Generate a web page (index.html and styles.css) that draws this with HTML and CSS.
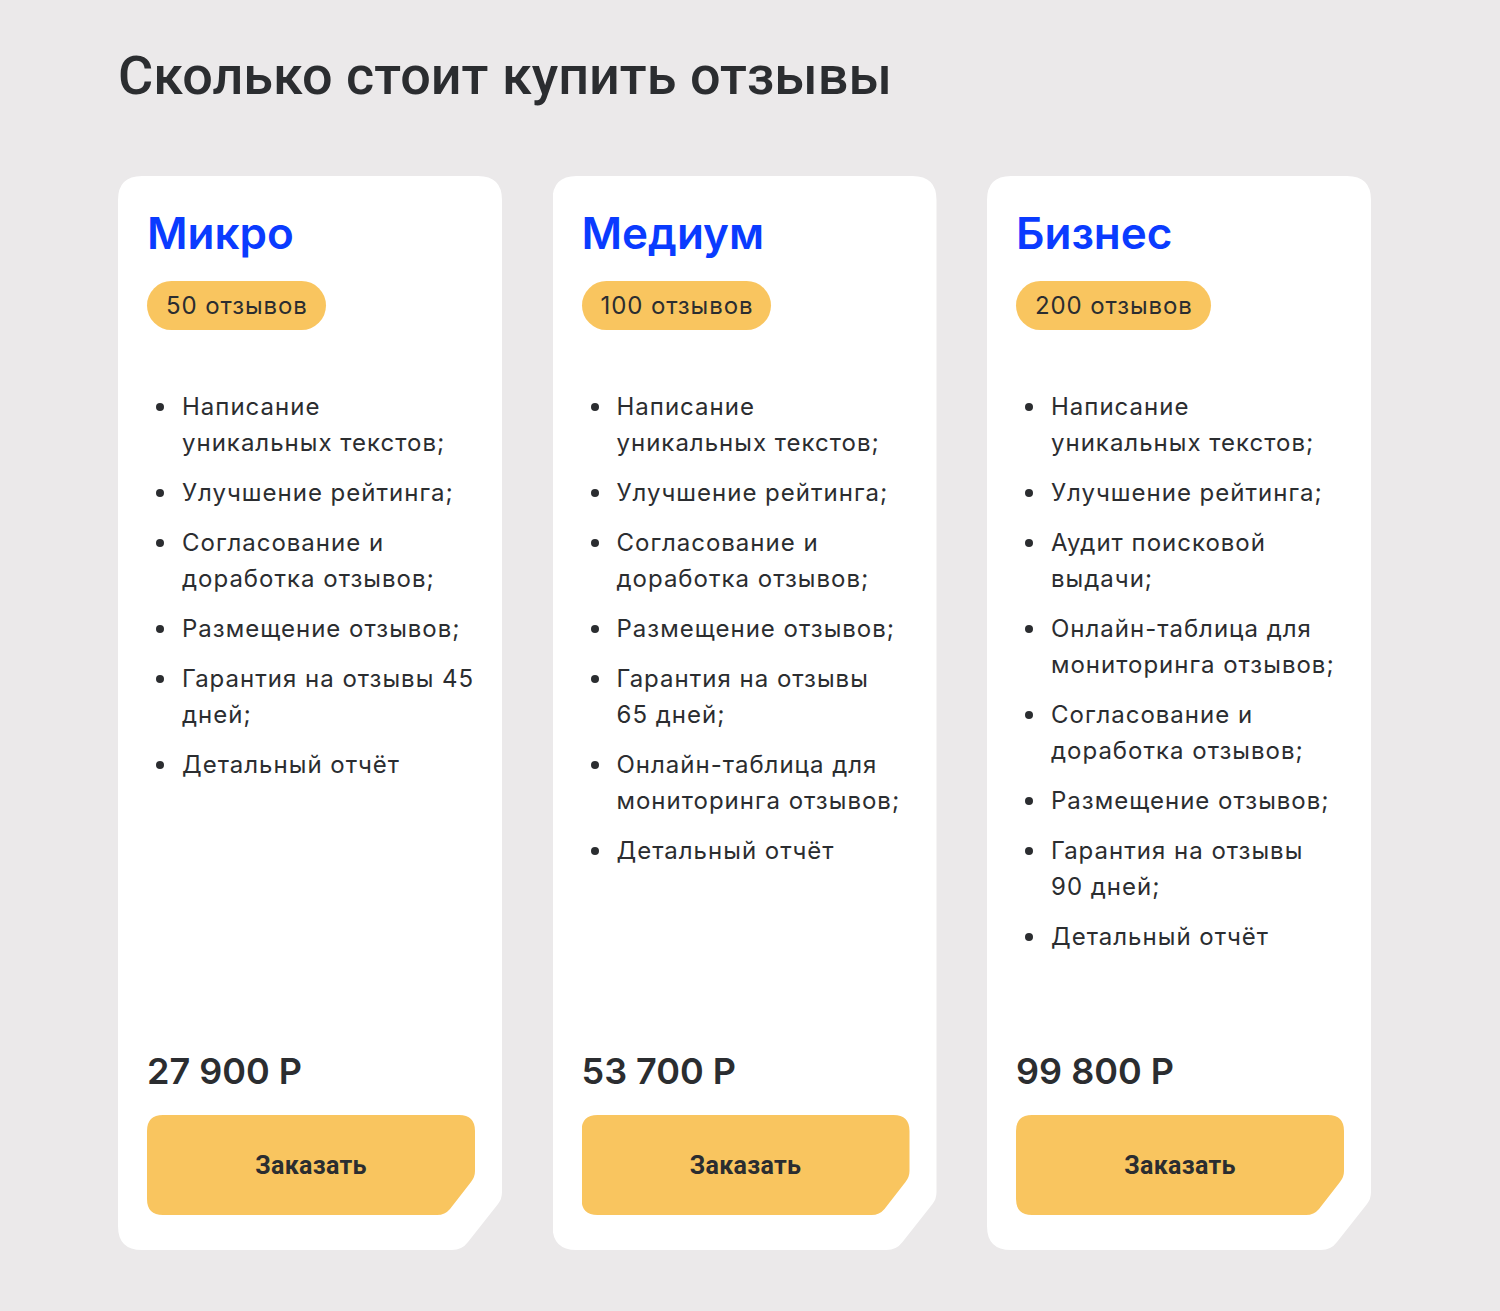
FILE: index.html
```html
<!DOCTYPE html>
<html lang="ru">
<head>
<meta charset="utf-8">
<title>Сколько стоит купить отзывы</title>
<link rel="stylesheet" href="styles.css">
</head>
<body>
<section class="pricing">
  <h1 class="title">Сколько стоит купить отзывы</h1>
  <div class="cards">
    <div class="card">
      <h2 class="name">Микро</h2>
      <span class="badge">50 отзывов</span>
      <ul class="features">
        <li><span>Написание<br>уникальных текстов;</span></li>
        <li><span>Улучшение рейтинга;</span></li>
        <li><span>Согласование и<br>доработка отзывов;</span></li>
        <li><span>Размещение отзывов;</span></li>
        <li><span>Гарантия на отзывы 45<br>дней;</span></li>
        <li><span>Детальный отчёт</span></li>
      </ul>
      <div class="price">27 900 Р</div>
      <button class="order">Заказать</button>
    </div>
    <div class="card">
      <h2 class="name">Медиум</h2>
      <span class="badge">100 отзывов</span>
      <ul class="features">
        <li><span>Написание<br>уникальных текстов;</span></li>
        <li><span>Улучшение рейтинга;</span></li>
        <li><span>Согласование и<br>доработка отзывов;</span></li>
        <li><span>Размещение отзывов;</span></li>
        <li><span>Гарантия на отзывы<br>65 дней;</span></li>
        <li><span>Онлайн-таблица для<br>мониторинга отзывов;</span></li>
        <li><span>Детальный отчёт</span></li>
      </ul>
      <div class="price">53 700 Р</div>
      <button class="order">Заказать</button>
    </div>
    <div class="card">
      <h2 class="name">Бизнес</h2>
      <span class="badge">200 отзывов</span>
      <ul class="features">
        <li><span>Написание<br>уникальных текстов;</span></li>
        <li><span>Улучшение рейтинга;</span></li>
        <li><span>Аудит поисковой<br>выдачи;</span></li>
        <li><span>Онлайн-таблица для<br>мониторинга отзывов;</span></li>
        <li><span>Согласование и<br>доработка отзывов;</span></li>
        <li><span>Размещение отзывов;</span></li>
        <li><span>Гарантия на отзывы<br>90 дней;</span></li>
        <li><span>Детальный отчёт</span></li>
      </ul>
      <div class="price">99 800 Р</div>
      <button class="order">Заказать</button>
    </div>
  </div>
</section>
</body>
</html>
```

FILE: styles.css
```css
* { box-sizing: border-box; }
html, body {
  margin: 0;
  padding: 0;
  background: #ebe9ea;
}
body {
  color: #2b2d30;
  font-family: "Inter", "Noto Sans", sans-serif;
}
.pricing {
  padding: 43px 0 0 118px;
  height: 1311px;
}
.title {
  margin: 0;
  font-family: "Roboto", "Liberation Sans", sans-serif;
  font-weight: 500;
  font-size: 54px;
  line-height: 66px;
  color: #2b2d30;
}
.cards {
  display: flex;
  gap: 50px;
  margin-top: 67px;
}
.card {
  width: 384.5px;
  height: 1074px;
  background: #fff;
  padding: 30px 29px 35px 29px;
  display: flex;
  flex-direction: column;
  align-items: flex-start;
  clip-path: path('M24,0 H360 Q384,0 384,24 V1016 Q384,1023 380,1028 L350,1066 Q344,1074 334,1074 H24 Q0,1074 0,1050 V24 Q0,0 24,0 Z');
}
.name {
  margin: 0;
  font-family: "Inter", sans-serif;
  font-weight: 600;
  font-size: 44px;
  line-height: 54px;
  color: #0a3bff;
}
.badge {
  margin-top: 21px;
  height: 49px;
  display: inline-flex;
  align-items: center;
  padding: 0 18px 0 19px;
  border-radius: 25px;
  background: #f9c55f;
  font-size: 24px;
  letter-spacing: 0.9px;
  color: #2b2d30;
}
.features {
  margin: 59px 0 0 0;
  padding: 0 0 0 9px;
  list-style: none;
  flex: 1;
}
.features li {
  display: flex;
  gap: 18px;
  font-size: 24px;
  line-height: 36px;
  letter-spacing: 1px;
  white-space: nowrap;
  margin-bottom: 14px;
  color: #2b2d30;
}
.features li::before {
  content: "";
  flex: none;
  width: 8px;
  height: 8px;
  margin-top: 14px;
  border-radius: 50%;
  background: #2b2d30;
}
.price {
  font-family: "Inter", sans-serif;
  font-weight: 600;
  font-size: 36px;
  line-height: 44px;
  color: #2b2d30;
  margin-bottom: 22px;
}
.order {
  width: 328px;
  height: 100px;
  border: 0;
  background: #f9c55f;
  font-family: "Roboto", "Liberation Sans", sans-serif;
  font-weight: 700;
  font-size: 25px;
  letter-spacing: 0.3px;
  color: #2b2d30;
  cursor: pointer;
  padding: 0;
  clip-path: path('M16,0 H312 Q328,0 328,16 V56 Q328,62 324,67 L303,94 Q298,100 290,100 H16 Q0,100 0,84 V16 Q0,0 16,0 Z');
}
```
